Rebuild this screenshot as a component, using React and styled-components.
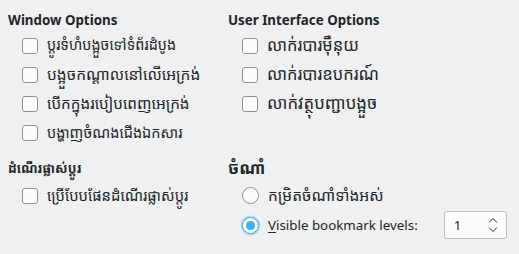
import React from "react";
import styled, { createGlobalStyle } from "styled-components";

const Global = createGlobalStyle`
  html, body { margin: 0; padding: 0; background: #eff0f1; }
  body {
    font-family: "Noto Sans", "Noto Sans Khmer", "Khmer OS", "DejaVu Sans", sans-serif;
    font-size: 13.33px;
    color: #232627;
  }
`;

const Page = styled.div`
  width: 519px;
  height: 254px;
  box-sizing: border-box;
  padding: 8px 8px 0 8px;
  display: grid;
  grid-template-columns: 220px 1fr;
  grid-template-rows: auto auto;
  align-content: start;
  row-gap: 3px;
`;

const Group = styled.section`
  display: flex;
  flex-direction: column;
`;

const Heading = styled.div`
  font-weight: 700;
  font-size: 13.33px;
  height: ${(p) => p.$h || 23}px;
  box-sizing: border-box;
  padding-top: ${(p) => p.$pt || 0}px;
  display: flex;
  align-items: center;
  white-space: nowrap;
`;

const Km = styled.span`
  font-size: ${(p) => p.$size || 15.5}px;
  line-height: 1;
`;

const Row = styled.label`
  height: ${(p) => p.$h || 29}px;
  display: flex;
  align-items: center;
  padding-left: 14px;
  gap: 9px;
  white-space: nowrap;
`;

const Check = styled.span`
  width: 16px;
  height: 16px;
  box-sizing: border-box;
  border: 1px solid #8f9193;
  border-radius: 3px;
  background: #fcfcfc;
  flex: none;
`;

const Radio = styled.span`
  width: 17px;
  height: 17px;
  box-sizing: border-box;
  border-radius: 50%;
  flex: none;
  border: 1px solid ${(p) => (p.$on ? "#3daee9" : "#8f9193")};
  background: #fcfcfc;
  display: flex;
  align-items: center;
  justify-content: center;
  box-shadow: ${(p) => (p.$on ? "0 0 0 1.5px rgba(61,174,233,0.35)" : "none")};
  &::after {
    content: "";
    display: ${(p) => (p.$on ? "block" : "none")};
    width: 9px;
    height: 9px;
    border-radius: 50%;
    background: #3daee9;
  }
`;

const Mnemonic = styled.span`
  text-decoration: underline;
  text-underline-offset: 2px;
`;

const Spin = styled.div`
  margin-left: 17px;
  width: 63px;
  height: 28px;
  box-sizing: border-box;
  border: 1px solid #bcbebf;
  border-radius: 3px;
  background: #fcfcfc;
  display: flex;
  align-items: center;
  justify-content: space-between;
  padding: 0 7px 0 9px;
`;

const Arrows = () => (
  <svg width="12" height="18" viewBox="0 0 12 18" fill="none" stroke="#232627" strokeWidth="1">
    <path d="M2 6.5 L6 2.5 L10 6.5" />
    <path d="M2 11.5 L6 15.5 L10 11.5" />
  </svg>
);

export default function App() {
  return (
    <>
      <Global />
      <Page>
        <Group>
          <Heading>Window Options</Heading>
          <Row><Check /><Km $size={14.4}>ប្តូរទំហំបង្អួចទៅទំព័រដំបូង</Km></Row>
          <Row><Check /><Km>បង្អួចកណ្តាលនៅលើអេក្រង់</Km></Row>
          <Row><Check /><Km $size={15.3}>បើកក្នុងរបៀបពេញអេក្រង់</Km></Row>
          <Row><Check /><Km $size={14.5}>បង្ហាញចំណងជើងឯកសារ</Km></Row>
        </Group>
        <Group>
          <Heading>User Interface Options</Heading>
          <Row><Check /><Km $size={16.5}>លាក់របារម៉ឺនុយ</Km></Row>
          <Row><Check /><Km $size={16.5}>លាក់របារឧបករណ៍</Km></Row>
          <Row><Check /><Km $size={16.8}>លាក់វត្ថុបញ្ជាបង្អួច</Km></Row>
        </Group>
        <Group>
          <Heading $h={31} $pt={6}><Km $size={13}>ដំណើរផ្លាស់ប្តូរ</Km></Heading>
          <Row><Check /><Km $size={14.8}>ប្រើបែបផែនដំណើរផ្លាស់ប្តូរ</Km></Row>
        </Group>
        <Group>
          <Heading $h={31} $pt={6}><Km $size={16.5}>ចំណាំ</Km></Heading>
          <Row><Radio /><Km>កម្រិតចំណាំទាំងអស់</Km></Row>
          <Row $h={30}>
            <Radio $on />
            <span><Mnemonic>V</Mnemonic>isible bookmark levels:</span>
            <Spin>1<Arrows /></Spin>
          </Row>
        </Group>
      </Page>
    </>
  );
}
